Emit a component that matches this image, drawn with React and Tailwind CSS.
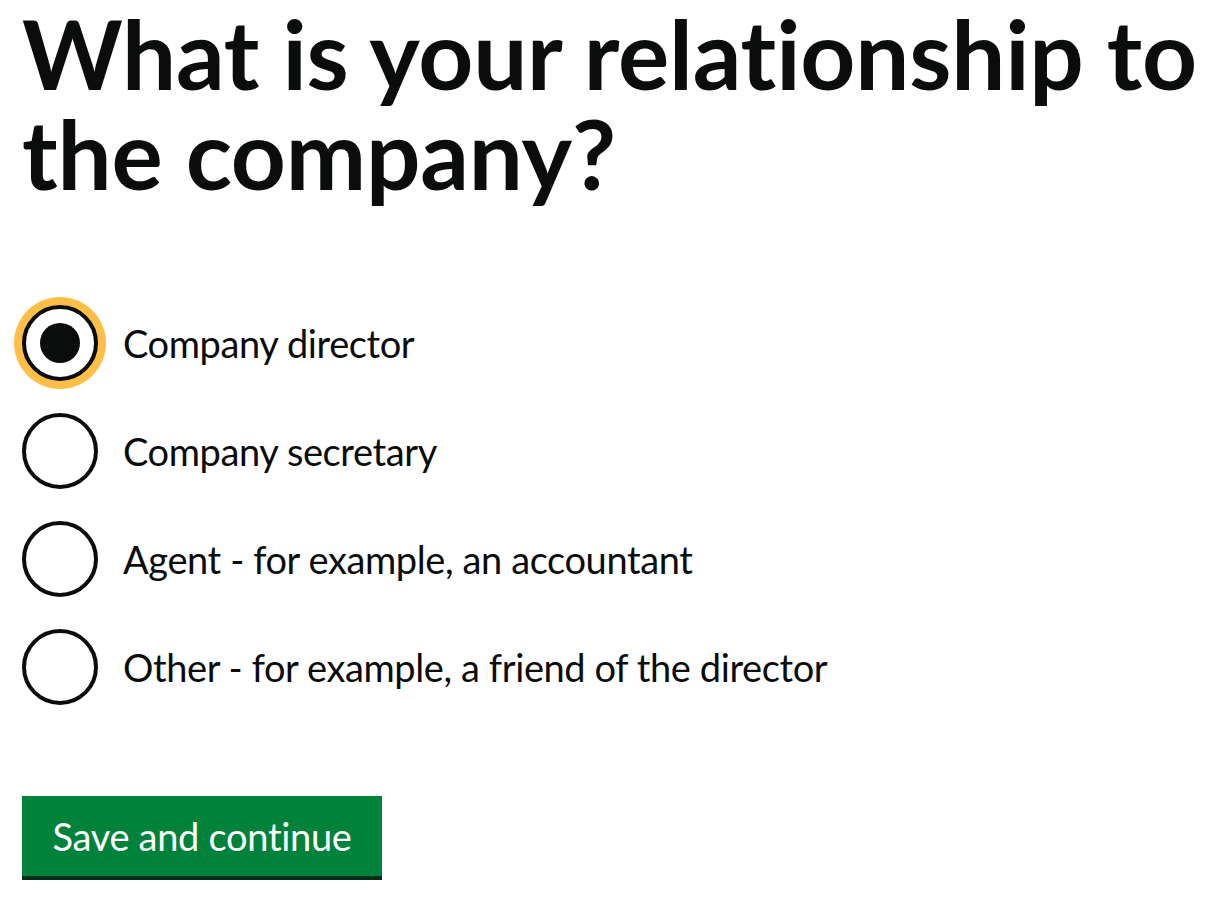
import { useState } from "react";

const options = [
  "Company director",
  "Company secretary",
  "Agent - for example, an accountant",
  "Other - for example, a friend of the director",
];

export default function App() {
  const [selected, setSelected] = useState(0);

  return (
    <div
      className="min-h-screen bg-white px-[22px] text-[#0b0c0c] [font-variant-ligatures:none]"
      style={{ fontFamily: 'Lato, "Noto Sans", Arial, sans-serif' }}
    >
      <h1 className="pt-[3px] text-[96px] font-bold leading-[100px] tracking-[-0.2px]">
        What is your relationship to the company?
      </h1>

      {/* Radios */}
      <div className="mt-[102px] flex flex-col gap-[32px]">
        {options.map((label, i) => {
          const checked = selected === i;
          return (
            <label
              key={label}
              className="flex cursor-pointer items-center"
              onClick={() => setSelected(i)}
            >
              <span
                className={
                  checked
                    ? "flex h-[76px] w-[76px] shrink-0 items-center justify-center rounded-full border-4 border-[#0b0c0c] bg-white shadow-[0_0_0_8px_#ffbf47]"
                    : "flex h-[76px] w-[76px] shrink-0 items-center justify-center rounded-full border-4 border-[#0b0c0c] bg-white"
                }
              >
                {checked && <span className="h-[40px] w-[40px] rounded-full bg-[#0b0c0c]" />}
              </span>
              <span className="ml-[25px] text-[38px] leading-[50px] tracking-[-0.4px]">{label}</span>
            </label>
          );
        })}
      </div>

      <button className="mt-[91px] h-[80px] w-[360px] bg-[#00823b] text-[38px] leading-none tracking-[-0.3px] text-white shadow-[0_4px_0_#002d18]">
        Save and continue
      </button>
    </div>
  );
}
